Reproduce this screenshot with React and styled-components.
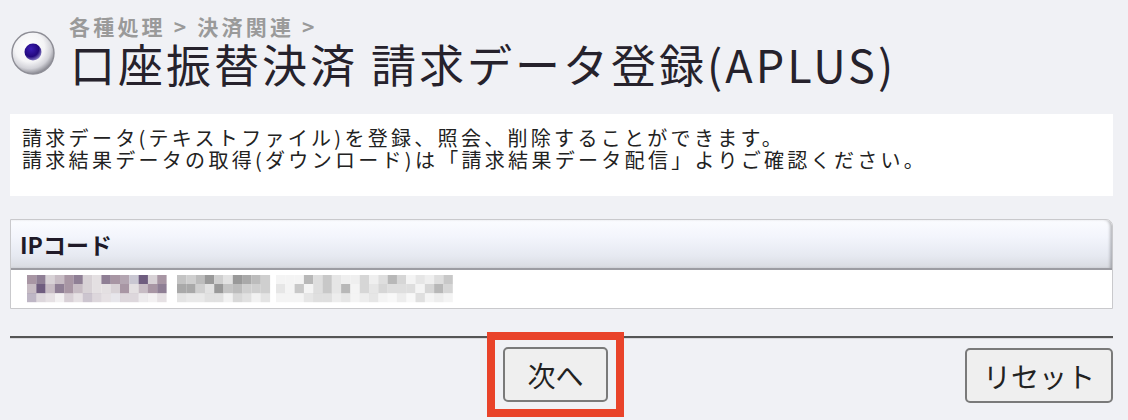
import React from 'react'
import styled, { createGlobalStyle } from 'styled-components'

const GlobalStyle = createGlobalStyle`
  html, body {
    margin: 0;
    background: #f0f1f5;
  }
  body {
    font-family: "Noto Sans CJK JP", "Noto Sans", sans-serif;
    color: #222;
  }
`

const Page = styled.div`
  width: 1128px;
  height: 420px;
  padding: 14px 15px 0 10px;
  box-sizing: border-box;
  overflow: hidden;
`

const Heading = styled.div`
  display: flex;
  align-items: flex-start;
`

const RadioMark = styled.div`
  width: 44px;
  height: 44px;
  margin: 17px 14px 0 1px;
  flex-shrink: 0;
`

const TitleBlock = styled.div`
  display: flex;
  flex-direction: column;
`

const Crumbs = styled.div`
  font-size: 21px;
  line-height: 25px;
  font-weight: 700;
  color: #9a9a9a;
  letter-spacing: 3.2px;
  white-space: pre;
`

const Title = styled.h1`
  margin: 0 0 0 1px;
  font-size: 45px;
  line-height: 49px;
  font-weight: 400;
  color: #26222c;
  letter-spacing: 3px;
  white-space: nowrap;
`

const InfoBox = styled.div`
  margin-top: 26px;
  background: #fff;
  padding: 13px 12px 25px;
  font-size: 20px;
  line-height: 22px;
  letter-spacing: 3.3px;
  color: #222;
`

const Table = styled.div`
  margin-top: 23px;
  border: 1px solid #c9c9cc;
  border-top-right-radius: 7px;
  background: #fff;
`

const HeadCell = styled.div`
  height: 48px;
  display: flex;
  align-items: center;
  padding-left: 9px;
  font-size: 23px;
  font-weight: 700;
  color: #201a28;
  border-top-right-radius: 6px;
  border-bottom: 2px solid #9c9ca2;
  background: linear-gradient(#fbfcff 0%, #f3f5fc 35%, #e6e9f1 75%, #d9dbe1 100%);
  box-shadow: inset -3px 0 3px -1px rgba(0, 0, 0, 0.25);
`

const BodyCell = styled.div`
  height: 38px;
  display: flex;
  align-items: center;
  padding-left: 16px;
`

const Divider = styled.hr`
  margin: 27px 0 0;
  border: 0;
  border-top: 2px solid #555;
  border-bottom: 1px solid #d8d8dc;
`

const ButtonRow = styled.div`
  margin-top: 8px;
  display: grid;
  grid-template-columns: 1fr auto 1fr;
  align-items: start;
`

const Highlight = styled.span`
  position: relative;
  grid-column: 2;
  display: inline-block;
  margin-left: -12px;

  &::after {
    content: '';
    position: absolute;
    inset: -15px -16px -15px -16px;
    border: 8px solid #e9432a;
    pointer-events: none;
  }
`

const Button = styled.button`
  height: 55px;
  padding: 0 ${(p) => p.$pad}px;
  background: #efefef;
  border: 2px solid #7a7a7a;
  border-radius: 5px;
  font-family: "Noto Sans CJK JP", sans-serif;
  font-size: 28px;
  color: #222;
  cursor: pointer;
`

const ResetSlot = styled.div`
  grid-column: 3;
  justify-self: end;
  margin-top: 1px;
`

const Radio = () => (
  <svg width="44" height="44" viewBox="0 0 44 44">
    <defs>
      <radialGradient id="sphere" cx="42%" cy="36%" r="64%">
        <stop offset="0%" stopColor="#ffffff" />
        <stop offset="55%" stopColor="#f4f4f6" />
        <stop offset="80%" stopColor="#d2d2d8" />
        <stop offset="100%" stopColor="#8c8c94" />
      </radialGradient>
      <radialGradient id="dot" cx="38%" cy="32%" r="70%">
        <stop offset="0%" stopColor="#3c1eb4" />
        <stop offset="65%" stopColor="#22087e" />
        <stop offset="100%" stopColor="#8a80c4" />
      </radialGradient>
    </defs>
    <circle cx="22" cy="22" r="21" fill="url(#sphere)" stroke="#8e8e96" strokeWidth="1.4" />
    <circle cx="22" cy="21" r="8.5" fill="url(#dot)" />
  </svg>
)

// pixelated (masked) value
const groups = [
  { x: 0, cols: 15, tones: ['#d8d2d6', '#c7bcc4', '#b4a6b2', '#a896a4', '#8f7f95', '#6f5d7f', '#c9c7d2', '#e4e0e2'] },
  { x: 150, cols: 10, tones: ['#a9a9a9', '#bcbcbc', '#cfcfcf', '#999', '#e2e2e2', '#c4c4c4'] },
  { x: 249, cols: 19, tones: ['#e6e6e6', '#d6d6d6', '#efefef', '#c8c8c8', '#dedede', '#b8b8b8', '#f4f4f4'] },
]

const Mosaic = () => {
  const cells = []
  let seed = 7
  const rnd = () => {
    seed = (seed * 9301 + 49297) % 233280
    return seed / 233280
  }
  groups.forEach((g, gi) => {
    for (let r = 0; r < 3; r++) {
      for (let c = 0; c < g.cols; c++) {
        const tone = g.tones[Math.floor(rnd() * g.tones.length)]
        const fade = r === 2 ? 0.45 : 1
        cells.push(
          <rect key={`${gi}-${r}-${c}`} x={g.x + c * 9.3} y={r * 9} width="9.4" height="9.2" fill={tone} opacity={fade} />
        )
      }
    }
  })
  return (
    <svg width="440" height="28" viewBox="0 0 440 28">
      {cells}
    </svg>
  )
}

const App = () => (
  <>
    <GlobalStyle />
    <Page>
      <Heading>
        <RadioMark>
          <Radio />
        </RadioMark>
        <TitleBlock>
          <Crumbs>{'各種処理 > 決済関連 >'}</Crumbs>
          <Title>口座振替決済 請求データ登録(APLUS)</Title>
        </TitleBlock>
      </Heading>

      <InfoBox>
        請求データ(テキストファイル)を登録、照会、削除することができます。
        <br />
        請求結果データの取得(ダウンロード)は「請求結果データ配信」よりご確認ください。
      </InfoBox>

      <Table>
        <HeadCell>IPコード</HeadCell>
        <BodyCell>
          <Mosaic />
        </BodyCell>
      </Table>

      <Divider />

      <ButtonRow>
        <Highlight>
          <Button $pad={22}>次へ</Button>
        </Highlight>
        <ResetSlot>
          <Button $pad={16}>リセット</Button>
        </ResetSlot>
      </ButtonRow>
    </Page>
  </>
)

export default App
